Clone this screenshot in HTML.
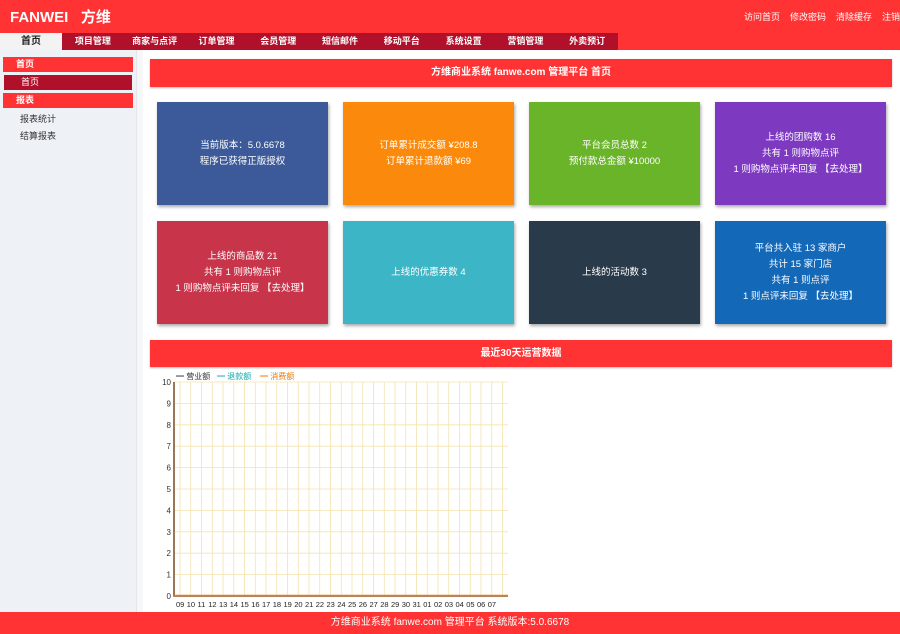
<!DOCTYPE html>
<html><head><meta charset="utf-8"><style>
*{margin:0;padding:0;box-sizing:border-box}
body{width:900px;height:634px;overflow:hidden;background:#fff;font-family:"Liberation Sans","Noto Sans CJK SC",sans-serif;font-size:10px;position:relative}
.hd{position:absolute;left:0;top:0;width:900px;height:50px;background:#ff3333}
.logo{position:absolute;left:10px;top:6px;color:#fff;font-size:15px;font-weight:bold}
.tl{position:absolute;right:0;top:10px;color:#fff;font-size:9px;white-space:nowrap}
.tl span{margin-left:10px}
.nav{position:absolute;left:62px;top:33px;width:556px;height:17px;background:#b0102a;display:flex}
.nav div{width:61.8px;color:#fff;font-size:9px;text-align:center;line-height:17px;font-weight:bold}
.home{position:absolute;left:0;top:33px;width:62px;height:17px;background:#f3f3f3;text-align:center;line-height:18px;font-size:10px;font-weight:bold;color:#222}
.side{position:absolute;left:0;top:50px;width:136px;height:562px;background:#eef2f7}
.strip{position:absolute;left:136px;top:50px;width:7px;height:562px;background:#f6f7f9;border-left:1px solid #e2e5ea}
.si{position:absolute;left:3px;width:130px;height:15px;color:#fff;font-size:9px;line-height:15px;padding-left:13px}
.sub{position:absolute;left:20px;font-size:9px;color:#333}
.bar{position:absolute;left:150px;width:742px;background:#ff3333;color:#fff;text-align:center;font-weight:bold;font-size:10px;box-shadow:0 1px 2px #bbb}
.c{position:absolute;width:171px;height:103px;color:#fff;font-size:9.5px;text-align:center;display:flex;align-items:center;justify-content:center;line-height:16px;box-shadow:1px 2px 3px #aaa}
.ft{position:absolute;left:0;top:612px;width:900px;height:22px;background:#ff3333;color:#fff;text-align:center;line-height:22px;font-size:10px}
</style></head><body>
<div class="hd"><div class="logo">FANWEI&nbsp;&nbsp;&nbsp;方维</div>
<div class="tl"><span>访问首页</span><span>修改密码</span><span>清除缓存</span><span>注销</span></div></div>
<div class="home">首页</div>
<div class="nav"><div>项目管理</div><div>商家与点评</div><div>订单管理</div><div>会员管理</div><div>短信邮件</div><div>移动平台</div><div>系统设置</div><div>营销管理</div><div>外卖预订</div></div>
<div class="side">
<div class="si" style="top:7px;background:#ff3333;font-weight:bold">首页</div>
<div class="si" style="top:25px;background:#b0102a;left:4px;width:128px;padding-left:17px">首页</div>
<div class="si" style="top:43px;background:#ff3333;font-weight:bold">报表</div>
<div class="sub" style="top:62px">报表统计</div>
<div class="sub" style="top:79px">结算报表</div>
</div>
<div class="strip"></div>
<div class="bar" style="top:59px;height:28px;line-height:28px">方维商业系统 fanwe.com 管理平台 首页</div>
<div class="c" style="left:157px;top:102px;background:#3c5a99">当前版本：5.0.6678<br>程序已获得正版授权</div>
<div class="c" style="left:343px;top:102px;background:#fb8a0c">订单累计成交额 ¥208.8<br>订单累计退款额 ¥69</div>
<div class="c" style="left:529px;top:102px;background:#6ab42a">平台会员总数 2<br>预付款总金额 ¥10000</div>
<div class="c" style="left:715px;top:102px;background:#7d3ac1">上线的团购数 16<br>共有 1 则购物点评<br>1 则购物点评未回复 【去处理】</div>
<div class="c" style="left:157px;top:221px;background:#c8344a">上线的商品数 21<br>共有 1 则购物点评<br>1 则购物点评未回复 【去处理】</div>
<div class="c" style="left:343px;top:221px;background:#3cb6c6">上线的优惠券数 4</div>
<div class="c" style="left:529px;top:221px;background:#293a4a">上线的活动数 3</div>
<div class="c" style="left:715px;top:221px;background:#1468b8">平台共入驻 13 家商户<br>共计 15 家门店<br>共有 1 则点评<br>1 则点评未回复 【去处理】</div>
<div class="bar" style="top:340px;height:27px;line-height:27px">最近30天运营数据</div>
<svg style="position:absolute;left:140px;top:367px" width="380" height="245" font-family="Liberation Sans" font-size="8">
<text x="36" y="12" fill="#333">━ 营业额</text><text x="77" y="12" fill="#1aa">━ 退款额</text><text x="120" y="12" fill="#e70">━ 消费额</text>
<g stroke="#f5e8b8" stroke-width="0.8">
<script></script>
</g>
<g id="g" stroke="#f3e3ad" stroke-width="0.8"></g>
<path d="M34 15V229H368" stroke="#7a4a20" stroke-width="1.5" fill="none"/>
<path d="M34 228.5H368" stroke="#e87a20" stroke-width="1.5"/>
<g fill="#333" text-anchor="end" id="y"></g>
<g fill="#222" font-size="7.5" id="x"></g>
</svg>
<div class="ft">方维商业系统 fanwe.com 管理平台 系统版本:5.0.6678</div>
<script>
var ns="http://www.w3.org/2000/svg",g=document.getElementById('g'),y=document.getElementById('y'),x=document.getElementById('x');
for(var i=0;i<=10;i++){var Y=15+i*21.4;var l=document.createElementNS(ns,'line');l.setAttribute('x1',34);l.setAttribute('x2',368);l.setAttribute('y1',Y);l.setAttribute('y2',Y);g.appendChild(l);var t=document.createElementNS(ns,'text');t.setAttribute('x',31);t.setAttribute('y',Y+3);t.textContent=10-i;y.appendChild(t);}
var lab=[];for(var d=9;d<=31;d++)lab.push(('0'+d).slice(-2));for(d=1;d<=7;d++)lab.push('0'+d);
for(i=0;i<31;i++){var X=40+i*10.75;var l=document.createElementNS(ns,'line');l.setAttribute('x1',X);l.setAttribute('x2',X);l.setAttribute('y1',15);l.setAttribute('y2',229);g.appendChild(l);if(i<lab.length){var t=document.createElementNS(ns,'text');t.setAttribute('x',X-4);t.setAttribute('y',240);t.textContent=lab[i];x.appendChild(t);}}
</script>
</body></html>
